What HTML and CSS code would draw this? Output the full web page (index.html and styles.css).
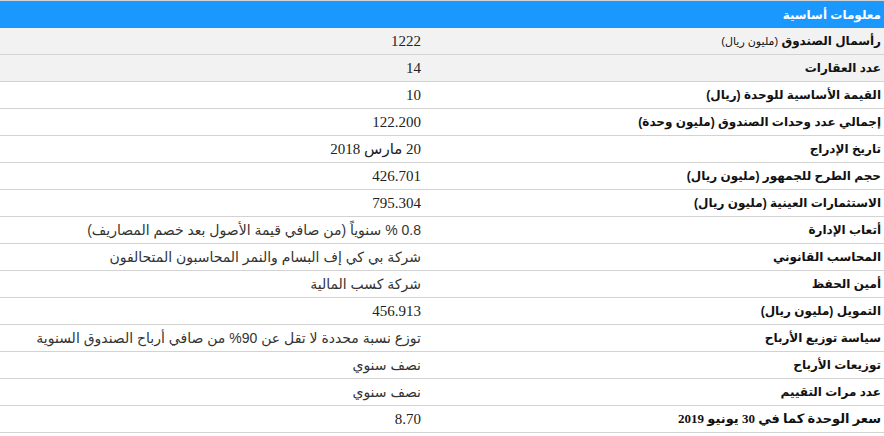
FILE: index.html
```html
<!DOCTYPE html>
<html lang="ar" dir="rtl">
<head>
  <meta charset="UTF-8" />
  <meta name="viewport" content="width=device-width, initial-scale=1.0"/>
  <title>معلومات أساسية</title>
  <link rel="stylesheet" href="styles.css">
</head>
<body>

  <table class="info-table">
    <tr class="kopf">
      <th colspan="2">معلومات أساسية</th>
    </tr>
    <tr class="grau">
      <td class="label">رأسمال الصندوق <span class="klein">(مليون ريال)</span></td>
      <td class="wert">1222</td>
    </tr>
    <tr class="grau">
      <td class="label">عدد العقارات</td>
      <td class="wert">14</td>
    </tr>
    <tr>
      <td class="label">القيمة الأساسية للوحدة (ريال)</td>
      <td class="wert">10</td>
    </tr>
    <tr>
      <td class="label">إجمالي عدد وحدات الصندوق (مليون وحدة)</td>
      <td class="wert">122.200</td>
    </tr>
    <tr>
      <td class="label">تاريخ الإدراج</td>
      <td class="wert">20 مارس 2018</td>
    </tr>
    <tr>
      <td class="label">حجم الطرح للجمهور (مليون ريال)</td>
      <td class="wert">426.701</td>
    </tr>
    <tr>
      <td class="label">الاستثمارات العينية (مليون ريال)</td>
      <td class="wert">795.304</td>
    </tr>
    <tr>
      <td class="label">أتعاب الإدارة</td>
      <td class="wert text">0.8 % سنوياً (من صافي قيمة الأصول بعد خصم المصاريف)</td>
    </tr>
    <tr>
      <td class="label">المحاسب القانوني</td>
      <td class="wert text">شركة بي كي إف البسام والنمر المحاسبون المتحالفون</td>
    </tr>
    <tr>
      <td class="label">أمين الحفظ</td>
      <td class="wert text">شركة كسب المالية</td>
    </tr>
    <tr>
      <td class="label">التمويل (مليون ريال)</td>
      <td class="wert">456.913</td>
    </tr>
    <tr>
      <td class="label">سياسة توزيع الأرباح</td>
      <td class="wert text">توزع نسبة محددة لا تقل عن 90% من صافي أرباح الصندوق السنوية</td>
    </tr>
    <tr>
      <td class="label">توزيعات الأرباح</td>
      <td class="wert text">نصف سنوي</td>
    </tr>
    <tr>
      <td class="label">عدد مرات التقييم</td>
      <td class="wert text">نصف سنوي</td>
    </tr>
    <tr>
      <td class="label serif">سعر الوحدة كما في 30 يونيو 2019</td>
      <td class="wert">8.70</td>
    </tr>
  </table>

</body>
</html>
```

FILE: styles.css
```css
body {
  margin: 0;
  background-color: #ffffff;
  font-family: "Liberation Sans", "DejaVu Sans", sans-serif;
  color: #111;
}
.info-table {
  width: 100%;
  border-collapse: collapse;
  border-top: 1px solid #d3d3d3;
}
.kopf th {
  background-color: #1a98fe;
  color: #fff;
  height: 27px;
  padding: 0 3px 0 0;
  text-align: right;
  font-size: 12px;
  font-weight: bold;
}
.info-table td {
  height: 26px;
  padding: 0;
  border-bottom: 1px solid #d3d3d3;
  vertical-align: middle;
}
.grau td {
  background-color: #f2f2f2;
}
.label {
  width: 452px;
  padding-right: 3px !important;
  font-size: 12px;
  font-weight: bold;
  white-space: nowrap;
}
.label .klein {
  font-size: 11px;
  font-weight: normal;
}
.label.serif {
  font-family: "Liberation Serif", "DejaVu Sans", serif;
  font-size: 13px;
}
.wert {
  text-align: right;
  padding-right: 8px !important;
  font-family: "Liberation Serif", "DejaVu Sans", serif;
  font-size: 15px;
  color: #222;
}
.wert.text {
  font-family: "Liberation Sans", "DejaVu Sans", sans-serif;
  font-size: 14px;
  color: #333;
}
```
